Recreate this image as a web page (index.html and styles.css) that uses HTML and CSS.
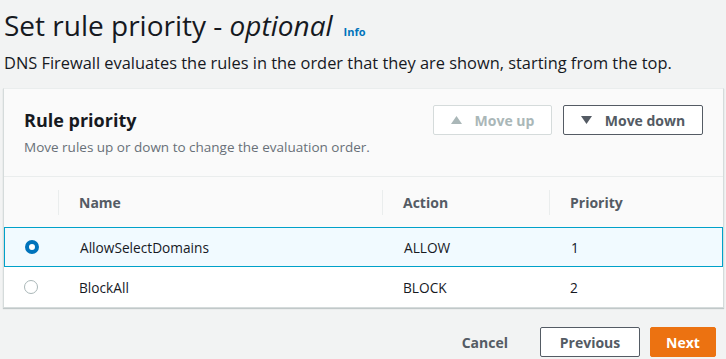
FILE: index.html
```html
<!DOCTYPE html>
<html lang="en">
<head>
    <meta charset="UTF-8">
    <meta name="viewport" content="width=device-width, initial-scale=1.0">
    <title>Set rule priority</title>
    <link rel="stylesheet" href="styles.css">
</head>
<body>
    <div class="page-head">
        <h1>Set rule priority - <em>optional</em><a href="#" class="info">Info</a></h1>
        <p class="page-desc">DNS Firewall evaluates the rules in the order that they are shown, starting from the top.</p>
    </div>

    <div class="card">
        <div class="card-header">
            <div>
                <h2>Rule priority</h2>
                <p class="card-desc">Move rules up or down to change the evaluation order.</p>
            </div>
            <div class="card-actions">
                <button class="btn btn-disabled">
                    <svg class="arrow" width="11" height="8" viewBox="0 0 11 8"><path d="M5.5 0L11 8H0z" fill="currentColor"/></svg>
                    Move up
                </button>
                <button class="btn btn-down">
                    <svg class="arrow" width="11" height="8" viewBox="0 0 11 8"><path d="M0 0h11L5.5 8z" fill="currentColor"/></svg>
                    Move down
                </button>
            </div>
        </div>

        <div class="table">
            <div class="row head">
                <div class="cell"></div>
                <div class="cell"><span class="th">Name</span></div>
                <div class="cell"><span class="th">Action</span></div>
                <div class="cell"><span class="th">Priority</span></div>
            </div>
            <div class="row selected">
                <div class="cell radio-cell"><span class="radio checked"></span></div>
                <div class="cell">AllowSelectDomains</div>
                <div class="cell">ALLOW</div>
                <div class="cell">1</div>
            </div>
            <div class="row">
                <div class="cell radio-cell"><span class="radio"></span></div>
                <div class="cell">BlockAll</div>
                <div class="cell">BLOCK</div>
                <div class="cell">2</div>
            </div>
        </div>
    </div>

    <div class="footer">
        <a href="#" class="link-btn">Cancel</a>
        <button class="btn btn-prev">Previous</button>
        <button class="btn btn-primary">Next</button>
    </div>
</body>
</html>
```

FILE: styles.css
```css
* {
    margin: 0;
    padding: 0;
    box-sizing: border-box;
    font-family: 'Open Sans', 'Noto Sans', sans-serif;
}
body {
    background: #f2f3f3;
    color: #16191f;
    width: 726px;
    height: 359px;
    overflow: hidden;
}
.page-head {
    padding: 5px 4px 0;
}
h1 {
    display: flex;
    align-items: baseline;
    height: 40px;
    font-size: 28px;
    font-weight: 400;
    line-height: 40px;
    white-space: pre;
}
h1 em {
    font-style: italic;
}
.info {
    font-size: 11px;
    font-weight: 700;
    color: #0073bb;
    text-decoration: none;
    margin-left: 11px;
}
.page-desc {
    font-size: 16.4px;
    line-height: 20px;
    margin-top: 8px;
}
.card {
    margin: 15px 2px 0 3px;
    background: #fafafa;
    border: 1px solid #d5dbdb;
    border-top-color: #eaeded;
    box-shadow: 0 1px 1px rgba(0, 28, 36, 0.2);
}
.card-header {
    display: flex;
    justify-content: space-between;
    padding: 15px 20px 19px 20px;
    border-bottom: 1px solid #eaeded;
}
h2 {
    font-size: 18px;
    font-weight: 700;
    line-height: 24px;
    margin-top: 4px;
}
.card-desc {
    font-size: 13.5px;
    color: #687078;
    line-height: 20px;
    margin-top: 5px;
}
.card-actions {
    display: flex;
    gap: 11px;
    align-items: flex-start;
    margin-top: 1px;
}
.btn {
    display: flex;
    align-items: center;
    justify-content: center;
    background: #fff;
    border: 1px solid #545b64;
    border-radius: 2px;
    color: #545b64;
    font-size: 14px;
    font-weight: 700;
    height: 30px;
    padding: 0;
    white-space: nowrap;
    cursor: pointer;
}
.btn .arrow {
    margin-right: 13px;
}
.btn-disabled {
    border-color: #d5dbdb;
    color: #aab7b8;
    width: 119px;
}
.btn-down {
    width: 140px;
}
.btn-prev {
    width: 100px;
}
.btn-primary {
    background: #ec7211;
    border-color: #ec7211;
    color: #fff;
    width: 66px;
}
.table {
    background: #fff;
}
.row {
    display: grid;
    grid-template-columns: 54px 324px 167px 1fr;
    align-items: center;
    height: 40px;
    font-size: 13.7px;
    border-top: 1px solid #eaeded;
}
.row .cell {
    padding-left: 21px;
}
.row .radio-cell {
    padding-left: 20px;
}
.row.head {
    background: #fafafa;
    height: 50px;
    border-top: none;
    padding-top: 1px;
    font-size: 14px;
}
.row.head .cell {
    padding-left: 0;
}
.th {
    display: block;
    border-left: 1px solid #eaeded;
    padding: 3px 20px;
    font-weight: 700;
    color: #545b64;
}
.row.selected {
    background: #f1faff;
    border: 1px solid #00a1c9;
}
.row.selected + .row {
    border-top: none;
}
.radio {
    display: block;
    width: 14px;
    height: 14px;
    border-radius: 50%;
    border: 1px solid #aab7b8;
    background: #fff;
}
.radio.checked {
    border: 4px solid #0073bb;
}
.footer {
    display: flex;
    justify-content: flex-end;
    align-items: center;
    gap: 10px;
    padding: 19px 10px 0 0;
}
.link-btn {
    font-size: 14px;
    font-weight: 700;
    color: #545b64;
    text-decoration: none;
    margin-right: 22px;
}
```
